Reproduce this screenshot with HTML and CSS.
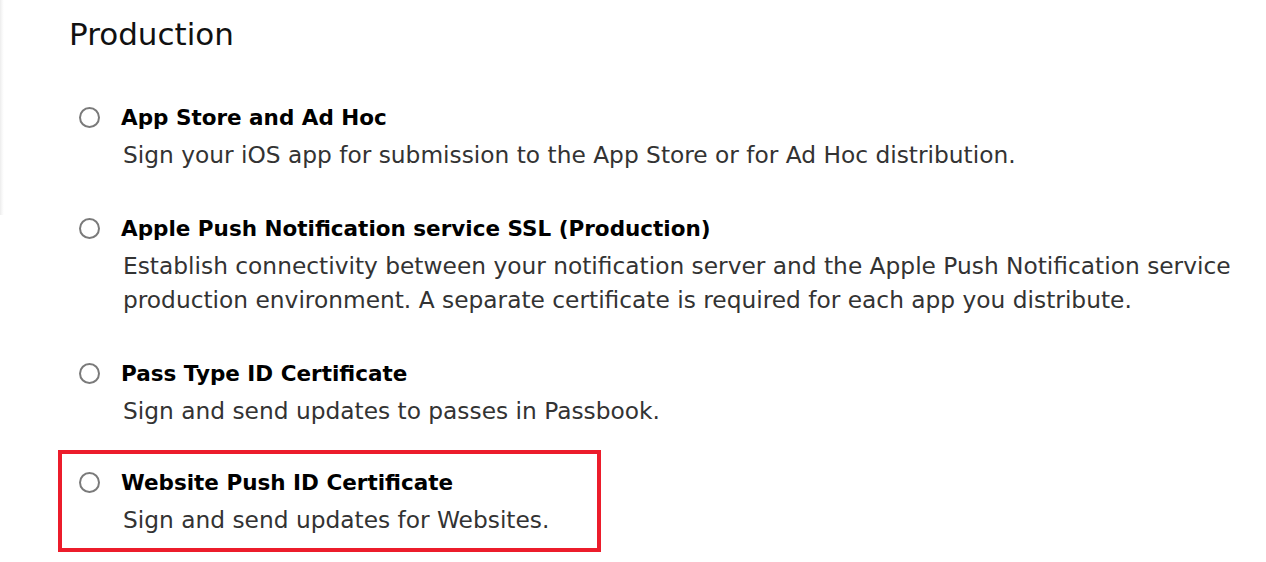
FILE: index.html
```html
<!DOCTYPE html>
<html lang="en">
<head>
<meta charset="utf-8">
<title>Production</title>
<link rel="stylesheet" href="styles.css">
</head>
<body>
<div class="page">
  <h2 class="heading">Production</h2>
  <div class="options">
    <div class="option">
      <span class="radio"></span>
      <div class="text">
        <div class="title">App Store and Ad Hoc</div>
        <div class="desc">Sign your iOS app for submission to the App Store or for Ad Hoc distribution.</div>
      </div>
    </div>
    <div class="option">
      <span class="radio"></span>
      <div class="text">
        <div class="title">Apple Push Notification service SSL (Production)</div>
        <div class="desc">Establish connectivity between your notification server and the Apple Push Notification service<br>production environment. A separate certificate is required for each app you distribute.</div>
      </div>
    </div>
    <div class="option">
      <span class="radio"></span>
      <div class="text">
        <div class="title">Pass Type ID Certificate</div>
        <div class="desc">Sign and send updates to passes in Passbook.</div>
      </div>
    </div>
    <div class="option option--highlight">
      <span class="radio"></span>
      <div class="text">
        <div class="title">Website Push ID Certificate</div>
        <div class="desc">Sign and send updates for Websites.</div>
      </div>
    </div>
  </div>
</div>
</body>
</html>
```
FILE: styles.css
```css
html, body {
  margin: 0;
  padding: 0;
  background: #fff;
}
body {
  font-family: "DejaVu Sans", "Liberation Sans", sans-serif;
  height: 562px;
  overflow: hidden;
}
.page {
  position: relative;
  min-height: 562px;
  padding: 15px 0 0 58px;
  box-sizing: border-box;
  background: linear-gradient(to right, #ececec 0, #f8f8f8 2px, #fff 4px) no-repeat 0 0 / 4px 215px;
}
.heading {
  margin: 0 0 0 11px;
  font-weight: normal;
  font-size: 31px;
  line-height: 38px;
  color: #111;
}
.options {
  display: flex;
  flex-direction: column;
  align-items: flex-start;
  gap: 13px;
  margin-top: 34px;
}
.option {
  display: flex;
  align-items: flex-start;
  gap: 21px;
  padding: 9px 48px 9px 17px;
  border: 4px solid transparent;
}
.option--highlight {
  border-color: #ec1c2b;
  margin-top: -4px;
  padding-top: 11px;
  padding-bottom: 11px;
}
.radio {
  flex: none;
  width: 17px;
  height: 17px;
  margin-top: 7px;
  border: 2px solid #7a7a7a;
  border-radius: 50%;
}
.title {
  font-weight: bold;
  font-size: 21.5px;
  line-height: 36px;
  color: #000;
  white-space: nowrap;
}
.desc {
  margin-top: 2px;
  margin-left: 2px;
  font-size: 23.3px;
  line-height: 34px;
  color: #333;
  white-space: nowrap;
}
```
